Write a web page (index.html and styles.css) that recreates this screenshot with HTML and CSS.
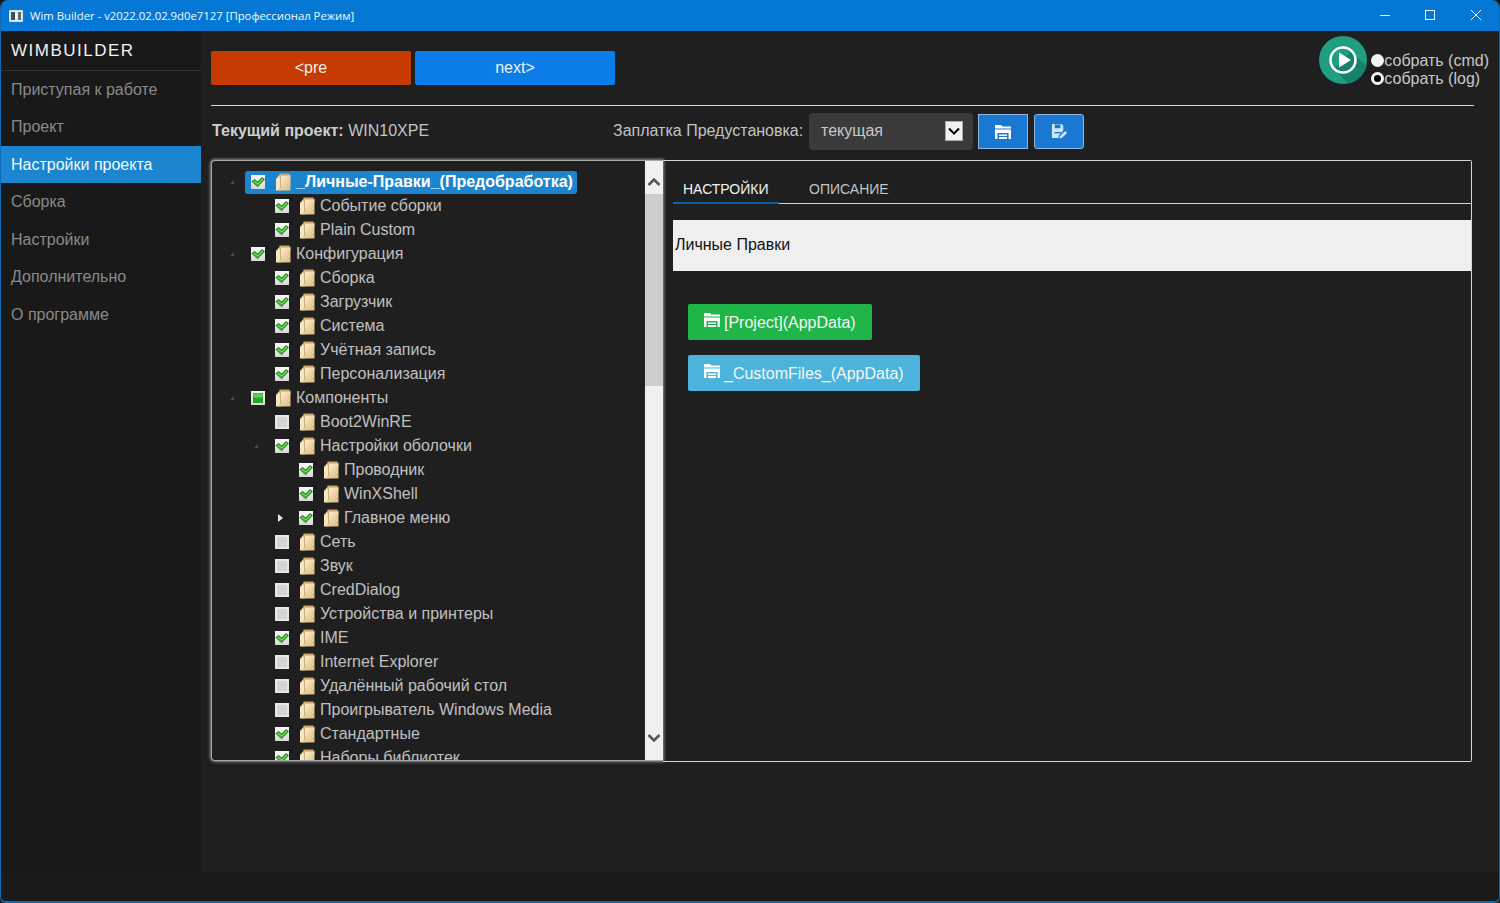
FILE: index.html
```html
<!DOCTYPE html>
<html lang="ru">
<head>
<meta charset="utf-8">
<title>Wim Builder</title>
<link rel="stylesheet" href="styles.css">
</head>
<body>
<svg class="defs" width="0" height="0">
  <defs>
    <linearGradient id="pg" x1="0" y1="0" x2="1" y2="1"><stop offset="0" stop-color="#fdf3d8"/><stop offset="1" stop-color="#dcb878"/></linearGradient>
    <linearGradient id="bg" x1="0" y1="0" x2="0" y2="1"><stop offset="0" stop-color="#f8f8f8"/><stop offset="1" stop-color="#d8d8d8"/></linearGradient>
  </defs>
  <symbol id="tf" viewBox="0 0 16 18">
    <path d="M1 6 4.500 2H7V16L5 17.500H1z" fill="#f8e8c0"/>
    <path d="M4.500 .500h9.500L15.500 2V5H4.500z" fill="#c7a870"/>
    <path d="M5.500 2.500h10V17.500H3.500L5.500 15z" fill="url(#pg)"/>
    <path d="M5.500 2.500V15l-2 2.500" fill="none" stroke="#b99a62" stroke-width=".7"/>
  </symbol>
  <symbol id="ck" viewBox="0 0 14 14">
    <rect width="14" height="14" fill="url(#bg)"/>
    <path d="M.500 6.500 3.500 4 6.500 6.500 11 2 14 4.500 6.500 12z" fill="#238f22"/>
    <path d="M2 6.500 3.500 5.500 6.500 8 11 3.500 12.500 4.700 6.500 10.200z" fill="#62d84d"/>
  </symbol>
  <symbol id="pa" viewBox="0 0 14 14">
    <rect width="14" height="14" fill="url(#bg)"/>
    <rect x="2" y="2" width="10" height="10" fill="#27a827"/>
    <rect x="2.500" y="2.500" width="9" height="4" fill="#5ed14f"/>
  </symbol>
  <symbol id="un" viewBox="0 0 14 14">
    <rect width="14" height="14" fill="#e8e8e8"/>
    <rect x="2" y="2" width="10" height="10" fill="#d4d4d4"/>
  </symbol>
  <symbol id="ex" viewBox="0 0 18 16">
    <path d="M1 1h6l1.500 1.500H17v2H1z" fill="#fff"/>
    <path d="M1 5.500h16V15h-2.500V9h-11v6H1z" fill="#fff"/>
    <path d="M5 10.500h8V12H5zM5 13h8v2H5z" fill="#fff"/>
  </symbol>
  <symbol id="sv" viewBox="0 0 18 18">
    <path d="M1 1h10l2 2v5l-5 5.500V16H1z" fill="#cfe6f8"/>
    <path d="M4 1.500h6v4H4z" fill="#1a78d2"/>
    <path d="M3.500 9.500h7V11h-7z" fill="#1a78d2"/>
    <path d="M9.500 14 15 8.500l2 2-5.500 5.500-2.500.500z" fill="#cfe6f8"/>
  </symbol>
</svg>
<div class="window">
  <header class="titlebar">
    <div class="appicon"><span></span></div>
    <span class="apptitle">Wim Builder - v2022.02.02.9d0e7127 [Профессионал Режим]</span>
    <div class="controls">
      <svg width="46" height="31" viewBox="0 0 46 31"><path d="M19 15.500h10" stroke="#fff" fill="none"/></svg>
      <svg width="46" height="31" viewBox="0 0 46 31"><rect x="18.500" y="10.500" width="9" height="9" stroke="#fff" fill="none"/></svg>
      <svg width="46" height="31" viewBox="0 0 46 31"><path d="M18 10l10 10M28 10l-10 10" stroke="#fff" fill="none"/></svg>
    </div>
  </header>
  <div class="body">
    <nav class="sidebar">
      <div class="brand">WIMBUILDER</div>
      <a class="navitem">Приступая к работе</a>
      <a class="navitem">Проект</a>
      <a class="navitem active">Настройки проекта</a>
      <a class="navitem">Сборка</a>
      <a class="navitem">Настройки</a>
      <a class="navitem">Дополнительно</a>
      <a class="navitem">О программе</a>
    </nav>
    <main class="main">
      <div class="toprow">
        <button class="navbtn pre">&lt;pre</button>
        <button class="navbtn next">next&gt;</button>
        <div class="runbox">
          <svg class="play" width="50" height="50" viewBox="0 0 50 50">
            <circle cx="25" cy="25" r="24" fill="#1f9e82"/>
            <path d="M16 34 33 17 48.500 31A24 24 0 0 1 30 48.500z" fill="#17826c"/>
            <circle cx="25" cy="25" r="12.500" fill="none" stroke="#fff" stroke-width="2.500"/>
            <path d="M21 17.500 33 25 21 32.500z" fill="#fff"/>
          </svg>
          <div class="radios">
            <label class="radio"><i class="dot"></i>собрать (cmd)</label>
            <label class="radio"><i class="dot on"></i>собрать (log)</label>
          </div>
        </div>
      </div>
      <hr class="rule">
      <div class="projrow">
        <div class="project"><b>Текущий проект:</b> WIN10XPE</div>
        <div class="presets">
          <span class="plabel">Заплатка Предустановка:</span>
          <div class="select"><span>текущая</span>
            <i class="arrow"><svg width="12" height="8" viewBox="0 0 12 8"><path d="M1 1.500 6 6.500 11 1.500" fill="none" stroke="#000" stroke-width="2"/></svg></i>
          </div>
          <button class="iconbtn square"><svg width="18" height="16"><use href="#ex"/></svg></button>
          <button class="iconbtn"><svg width="17" height="17"><use href="#sv"/></svg></button>
        </div>
      </div>
      <div class="panes">
        <section class="treepane">
          <div class="tree">
            <div class="row l0"><i class="tw open"></i><span class="sel"><svg class="cb"><use href="#ck"/></svg><svg class="fo"><use href="#tf"/></svg><b>_Личные-Правки_(Предобработка)</b></span></div>
            <div class="row l1"><i class="tw"></i><svg class="cb"><use href="#ck"/></svg><svg class="fo"><use href="#tf"/></svg><span>Событие сборки</span></div>
            <div class="row l1"><i class="tw"></i><svg class="cb"><use href="#ck"/></svg><svg class="fo"><use href="#tf"/></svg><span>Plain Custom</span></div>
            <div class="row l0"><i class="tw open"></i><svg class="cb"><use href="#ck"/></svg><svg class="fo"><use href="#tf"/></svg><span>Конфигурация</span></div>
            <div class="row l1"><i class="tw"></i><svg class="cb"><use href="#ck"/></svg><svg class="fo"><use href="#tf"/></svg><span>Сборка</span></div>
            <div class="row l1"><i class="tw"></i><svg class="cb"><use href="#ck"/></svg><svg class="fo"><use href="#tf"/></svg><span>Загрузчик</span></div>
            <div class="row l1"><i class="tw"></i><svg class="cb"><use href="#ck"/></svg><svg class="fo"><use href="#tf"/></svg><span>Система</span></div>
            <div class="row l1"><i class="tw"></i><svg class="cb"><use href="#ck"/></svg><svg class="fo"><use href="#tf"/></svg><span>Учётная запись</span></div>
            <div class="row l1"><i class="tw"></i><svg class="cb"><use href="#ck"/></svg><svg class="fo"><use href="#tf"/></svg><span>Персонализация</span></div>
            <div class="row l0"><i class="tw open"></i><svg class="cb"><use href="#pa"/></svg><svg class="fo"><use href="#tf"/></svg><span>Компоненты</span></div>
            <div class="row l1"><i class="tw"></i><svg class="cb"><use href="#un"/></svg><svg class="fo"><use href="#tf"/></svg><span>Boot2WinRE</span></div>
            <div class="row l1"><i class="tw open"></i><svg class="cb"><use href="#ck"/></svg><svg class="fo"><use href="#tf"/></svg><span>Настройки оболочки</span></div>
            <div class="row l2"><i class="tw"></i><svg class="cb"><use href="#ck"/></svg><svg class="fo"><use href="#tf"/></svg><span>Проводник</span></div>
            <div class="row l2"><i class="tw"></i><svg class="cb"><use href="#ck"/></svg><svg class="fo"><use href="#tf"/></svg><span>WinXShell</span></div>
            <div class="row l2"><i class="tw shut"></i><svg class="cb"><use href="#ck"/></svg><svg class="fo"><use href="#tf"/></svg><span>Главное меню</span></div>
            <div class="row l1"><i class="tw"></i><svg class="cb"><use href="#un"/></svg><svg class="fo"><use href="#tf"/></svg><span>Сеть</span></div>
            <div class="row l1"><i class="tw"></i><svg class="cb"><use href="#un"/></svg><svg class="fo"><use href="#tf"/></svg><span>Звук</span></div>
            <div class="row l1"><i class="tw"></i><svg class="cb"><use href="#un"/></svg><svg class="fo"><use href="#tf"/></svg><span>CredDialog</span></div>
            <div class="row l1"><i class="tw"></i><svg class="cb"><use href="#un"/></svg><svg class="fo"><use href="#tf"/></svg><span>Устройства и принтеры</span></div>
            <div class="row l1"><i class="tw"></i><svg class="cb"><use href="#ck"/></svg><svg class="fo"><use href="#tf"/></svg><span>IME</span></div>
            <div class="row l1"><i class="tw"></i><svg class="cb"><use href="#un"/></svg><svg class="fo"><use href="#tf"/></svg><span>Internet Explorer</span></div>
            <div class="row l1"><i class="tw"></i><svg class="cb"><use href="#un"/></svg><svg class="fo"><use href="#tf"/></svg><span>Удалённый рабочий стол</span></div>
            <div class="row l1"><i class="tw"></i><svg class="cb"><use href="#un"/></svg><svg class="fo"><use href="#tf"/></svg><span>Проигрыватель Windows Media</span></div>
            <div class="row l1"><i class="tw"></i><svg class="cb"><use href="#ck"/></svg><svg class="fo"><use href="#tf"/></svg><span>Стандартные</span></div>
            <div class="row l1"><i class="tw"></i><svg class="cb"><use href="#ck"/></svg><svg class="fo"><use href="#tf"/></svg><span>Наборы библиотек</span></div>
          </div>
          <div class="scrollbar">
            <svg class="sarrow" width="18" height="33" viewBox="0 0 18 33"><path d="M3.500 24 9 18.500 14.500 24" fill="none" stroke="#555" stroke-width="2.500"/></svg>
            <div class="thumb"></div>
            <svg class="sarrow" width="18" height="44" viewBox="0 0 18 44"><path d="M3.500 19 9 24.500 14.500 19" fill="none" stroke="#555" stroke-width="2.500"/></svg>
          </div>
        </section>
        <section class="detail">
          <div class="tabs">
            <span class="tab current">НАСТРОЙКИ</span>
            <span class="tab">ОПИСАНИЕ</span>
          </div>
          <div class="strip">Личные Правки</div>
          <div class="actions">
            <button class="act green"><svg width="18" height="16"><use href="#ex"/></svg>[Project](AppData)</button>
            <button class="act cyan"><svg width="18" height="16"><use href="#ex"/></svg>_CustomFiles_(AppData)</button>
          </div>
        </section>
      </div>
    </main>
  </div>
  <footer class="footer"></footer>
</div>
</body>
</html>
```

FILE: styles.css
```css
* { box-sizing: border-box; }
html, body { margin: 0; height: 100%; background: #1a1a1a; }
body { font-family: "Liberation Sans", Arial, sans-serif; font-size: 16px; overflow: hidden; }
.defs { position: absolute; }
button { font-family: inherit; border: 0; padding: 0; }

.window { width: 1500px; height: 903px; display: flex; flex-direction: column; border-left: 1px solid #0a6cb8; border-right: 1px solid #0a6cb8; border-bottom: 2px solid #0a6cb8; border-radius: 8px 8px 6px 6px; overflow: hidden; background: #1a1a1a; }

.titlebar { height: 31px; flex: none; background: #0478d4; display: flex; align-items: center; color: #fff; margin: 0 -1px; }
.appicon { width: 14px; height: 12px; margin-left: 9px; background: #e6eef0; border: 1px solid #cfd8da; position: relative; }
.appicon span { position: absolute; left: 1px; top: 1px; width: 4px; height: 8px; background: #34505c; }
.appicon::after { content: ""; position: absolute; right: 1px; top: 1px; width: 3px; height: 8px; background: #5a6d75; }
.apptitle { margin-left: 7px; font-family: "Open Sans", "Liberation Sans", sans-serif; font-size: 11.330px; color: #f2f8fd; }
.controls { margin-left: auto; display: flex; margin-right: 1px; }
.controls svg { display: block; }

.body { flex: 1; display: flex; min-height: 0; }
.sidebar { width: 200px; flex: none; background: #191919; }
.brand { height: 39.500px; line-height: 40px; padding-left: 10px; color: #f2f2f2; font-size: 17px; letter-spacing: 1.500px; border-bottom: 1px solid #333; }
.navitem { display: block; height: 37.600px; line-height: 37px; padding-left: 10px; color: #8a8a8a; }
.navitem.active { background: #1b86cf; color: #f4f8fb; }

.main { flex: 1; background: #1f1f1f; padding: 20px 25px 0 10px; min-width: 0; }
.toprow { display: flex; height: 54px; align-items: flex-start; gap: 4px; }
.navbtn { width: 200px; height: 34px; border-radius: 2px; color: #f0f0f0; font-size: 16px; }
.navbtn.pre { background: #c63b02; }
.navbtn.next { background: #0b7de8; }
.runbox { margin-left: auto; display: flex; margin-top: -16px; margin-right: -15px; }
.play { display: block; }
.radios { margin-left: 3px; margin-top: 17px; }
.radio { display: flex; align-items: center; height: 18px; color: #c8c8c8; line-height: 18px; }
.dot { width: 13px; height: 13px; border-radius: 50%; background: #f4f4f4; margin-top: -2px; }
.dot.on { border: 3px solid #f4f4f4; background: #000; }

.rule { margin: 0; border: 0; height: 1px; background: #d6d6d6; width: 1263px; }

.projrow { display: flex; align-items: center; height: 48px; margin-bottom: 6px; padding-top: 2px; }
.project { width: 402px; padding-left: 1px; color: #c4c4c4; }
.project b { color: #cfcfcf; }
.presets { display: flex; align-items: center; }
.plabel { color: #c4c4c4; width: 196px; }
.select { width: 164px; height: 37px; background: #3a3a3a; border-radius: 4px; display: flex; align-items: center; justify-content: space-between; padding: 0 10px 0 12px; color: #c8c8c8; }
.arrow { width: 18px; height: 20px; background: #f1f1f1; border: 1px solid #aaa; display: flex; align-items: center; justify-content: center; }
.iconbtn { width: 50px; height: 35px; background: #1a78d2; border: 1px solid #8cb8e2; border-radius: 3px; margin: 1px 0 0 6px; display: flex; align-items: center; justify-content: center; }
.iconbtn.square { margin-left: 5px; border-radius: 0; }

.panes { display: flex; height: 602px; width: 1261px; }
.treepane { width: 452px; height: 601px; flex: none; display: flex; border: 1px solid #a8a8a8; border-right: 0; border-radius: 4px 0 0 4px; box-shadow: 0 0 3px 1px rgba(190,190,190,.7); background: #1f1f1f; overflow: hidden; }
.tree { flex: 1; padding-top: 9px; overflow: hidden; color: #c0c0c0; }
.row { height: 24px; display: flex; align-items: center; white-space: nowrap; }
.row.l0 { padding-left: 15px; }
.row.l1 { padding-left: 39px; }
.row.l2 { padding-left: 63px; }
.tw { width: 24px; flex: none; display: flex; align-items: center; }
.tw.open::before { content: ""; width: 0; height: 0; margin-left: 3px; border-style: solid; border-width: 0 0 4px 4px; border-color: transparent transparent #4e4e4e transparent; }
.tw.shut::before { content: ""; width: 0; height: 0; margin-left: 3px; border-style: solid; border-width: 4px 0 4px 5px; border-color: transparent transparent transparent #e6e6e6; }
.cb { width: 14px; height: 14px; flex: none; }
.fo { width: 16px; height: 18px; margin-left: 10px; margin-right: 5px; flex: none; }
.sel { display: flex; align-items: center; height: 23px; background: #1b86cf; border-radius: 3px; padding: 0 4px 0 6px; margin-left: -6px; color: #fff; }
.sel b { font-weight: 700; }

.scrollbar { width: 18px; flex: none; background: #f0f0f0; display: flex; flex-direction: column; box-shadow: 1px 0 2px #888; }
.sarrow { display: block; flex: none; }
.thumb { height: 192px; background: #cdcdcd; }
.scrollbar .sarrow:last-child { margin-top: auto; }

.detail { flex: 1; height: 602px; border: 1px solid #d4d4d4; border-left: 0; border-radius: 0 2px 2px 0; padding-left: 10px; }
.tabs { height: 43px; display: flex; border-bottom: 1px solid #d4d4d4; padding-top: 19px; }
.tab { font-size: 14px; color: #c4c4c4; height: 24px; padding: 0 10px; margin-right: 10px; line-height: 18px; }
.tab.current { color: #f2f2f2; border-bottom: 2px solid #0f5fa6; width: 106px; padding-right: 0; margin-right: 20px; }
.strip { margin-top: 16px; height: 51px; background: #efefef; color: #111; line-height: 49px; padding-left: 2px; }
.actions { padding: 33px 0 0 15px; display: flex; flex-direction: column; align-items: flex-start; gap: 15px; }
.act { height: 36px; padding: 1px 16px 0 15px; color: #f4f8f4; font-size: 16px; border-radius: 2px; display: flex; align-items: center; gap: 3px; }
.act svg { margin-top: -5px; }
.act.green { background: #1fb548; }
.act.cyan { background: #4cb4dc; }

.footer { height: 29px; flex: none; background: #1a1a1a; }
```
